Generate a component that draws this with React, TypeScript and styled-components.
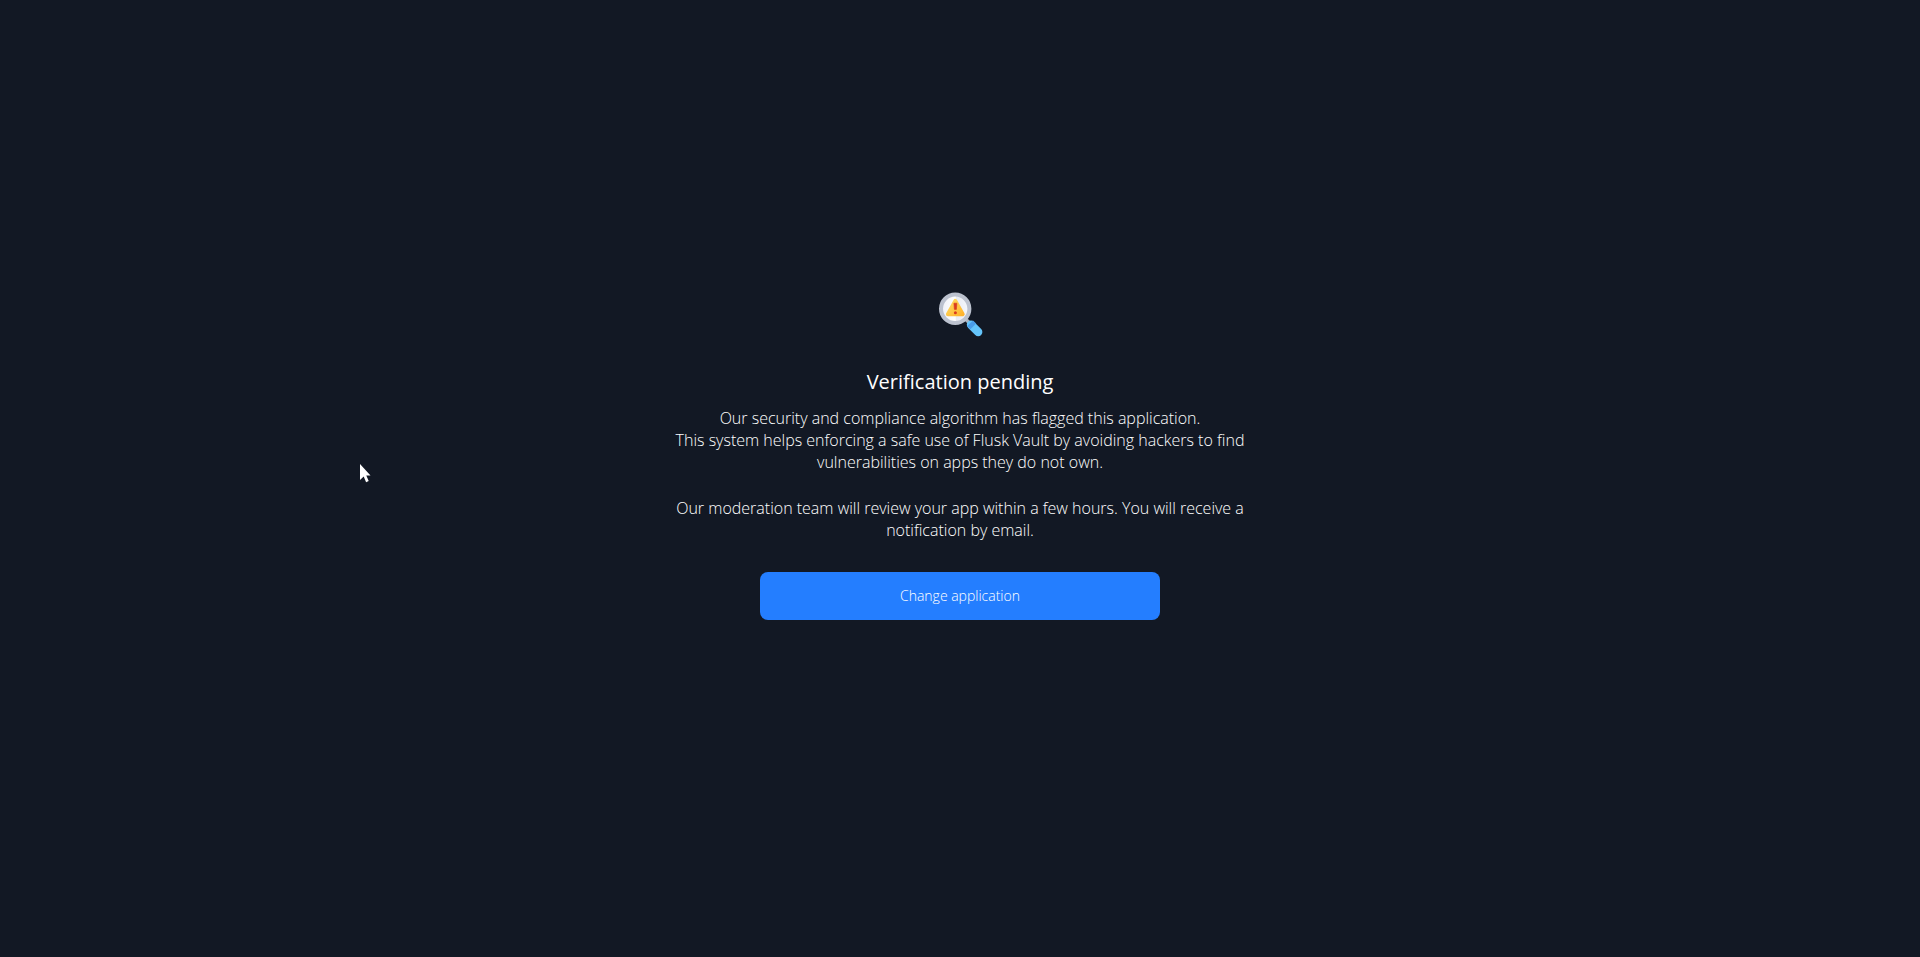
import React from "react";
import styled, { createGlobalStyle } from "styled-components";

const GlobalStyle = createGlobalStyle`
  *, *::before, *::after { box-sizing: border-box; }
  body {
    margin: 0;
    background: #121824;
    color: #ffffff;
    font-family: "Open Sans", "Noto Sans", sans-serif;
  }
`;

const Page = styled.main`
  position: relative;
  min-height: 100vh;
  padding: 24px 24px 72px;
  display: flex;
  align-items: center;
  justify-content: center;
`;

const Notice = styled.section`
  width: 100%;
  max-width: 600px;
  display: flex;
  flex-direction: column;
  align-items: center;
  text-align: center;
`;

const Title = styled.h1`
  margin: 30px 0 11px;
  font-size: 20px;
  line-height: 28px;
  font-weight: 500;
`;

const Message = styled.div`
  display: flex;
  flex-direction: column;
  gap: 24px;
`;

const Paragraph = styled.p`
  margin: 0;
  font-size: 16px;
  line-height: 22px;
  font-weight: 300;
`;

const PrimaryButton = styled.button`
  width: 100%;
  max-width: 400px;
  height: 48px;
  margin-top: 31px;
  border: 0;
  border-radius: 8px;
  background: #247eff;
  color: #ffffff;
  font-family: inherit;
  font-size: 14px;
  font-weight: 300;
  cursor: pointer;
`;

const Pointer = styled.svg`
  position: absolute;
  left: 360px;
  top: 464px;
  pointer-events: none;
`;

function InspectIcon() {
  return (
    <svg width="48" height="48" viewBox="0 0 48 48" aria-hidden="true">
      <defs>
        <linearGradient id="lens" x1="0" y1="0" x2="1" y2="0">
          <stop offset="0" stopColor="#eef0f6" />
          <stop offset="0.5" stopColor="#ffffff" />
          <stop offset="0.54" stopColor="#e9ecf4" />
          <stop offset="1" stopColor="#f6f8fc" />
        </linearGradient>
        <linearGradient id="sign" x1="0" y1="0" x2="1" y2="1">
          <stop offset="0" stopColor="#ffdc64" />
          <stop offset="1" stopColor="#ffb42e" />
        </linearGradient>
      </defs>
      <path d="M30 29.5l3.5 3.5" stroke="#a9b2c0" strokeWidth="3.5" />
      <path d="M35 34.8l7.2 7.2" stroke="#64c4fa" strokeWidth="8.4" strokeLinecap="round" />
      <path d="M31.2 36l5.8-5.6 3.2 3.2-5.8 5.6z" fill="#4a9ce8" />
      <circle cx="19.2" cy="18.8" r="14.2" fill="url(#lens)" stroke="#bcc2cf" strokeWidth="4" />
      <path
        d="M19.3 10.9l7.4 13.3H11.9z"
        fill="url(#sign)"
        stroke="url(#sign)"
        strokeWidth="4"
        strokeLinejoin="round"
      />
      <path d="M17.9 13.2h3l-.5 6.2h-2z" fill="#d93b20" stroke="#d93b20" strokeWidth=".6" strokeLinejoin="round" />
      <circle cx="19.4" cy="22.7" r="1.5" fill="#d93b20" />
    </svg>
  );
}

export default function App() {
  return (
    <>
      <GlobalStyle />
      <Page>
        <Notice>
          <InspectIcon />
          <Title>Verification pending</Title>
          <Message>
            <Paragraph>
              Our security and compliance algorithm has flagged this application.
              <br />
              This system helps enforcing a safe use of Flusk Vault by avoiding hackers to find
              vulnerabilities on apps they do not own.
            </Paragraph>
            <Paragraph>
              Our moderation team will review your app within a few hours. You will receive a
              notification by email.
            </Paragraph>
          </Message>
          <PrimaryButton type="button">Change application</PrimaryButton>
        </Notice>
        <Pointer width="12" height="19" viewBox="0 0 12 19" aria-hidden="true">
          <path d="M0 0v16l3.7-3.5 2.4 5.7 2.6-1.1-2.4-5.5h4.2z" fill="#ffffff" />
        </Pointer>
      </Page>
    </>
  );
}
